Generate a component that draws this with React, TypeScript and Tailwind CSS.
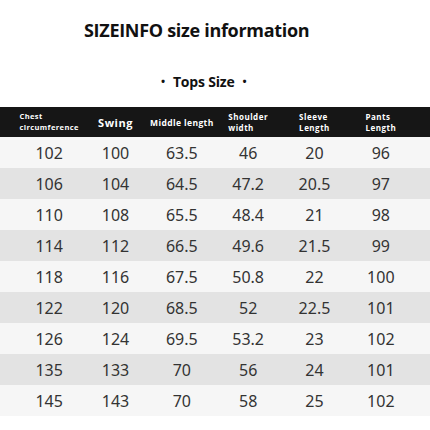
import * as React from "react";

const headers: { lines: string[]; size: string }[] = [
  { lines: ["Chest", "circumference"], size: "text-[7.5px] tracking-[0.4px]" },
  { lines: ["Swing"], size: "text-[11px] tracking-[0.5px]" },
  { lines: ["Middle length"], size: "text-[8.5px] tracking-[0.4px]" },
  { lines: ["Shoulder", "width"], size: "text-[8px] tracking-[0.5px]" },
  { lines: ["Sleeve", "Length"], size: "text-[8px] tracking-[0.5px]" },
  { lines: ["Pants", "Length"], size: "text-[8px] tracking-[0.5px]" },
];

const rows: string[][] = [
  ["102", "100", "63.5", "46", "20", "96"],
  ["106", "104", "64.5", "47.2", "20.5", "97"],
  ["110", "108", "65.5", "48.4", "21", "98"],
  ["114", "112", "66.5", "49.6", "21.5", "99"],
  ["118", "116", "67.5", "50.8", "22", "100"],
  ["122", "120", "68.5", "52", "22.5", "101"],
  ["126", "124", "69.5", "53.2", "23", "102"],
  ["135", "133", "70", "56", "24", "101"],
  ["145", "143", "70", "58", "25", "102"],
];

export default function App() {
  return (
    <div className="h-[430px] w-[430px] overflow-hidden bg-white font-['Open_Sans',sans-serif]">
      <div className="flex h-[60px] items-center pl-[84px]">
        <h1 className="text-[18px] font-bold tracking-[-0.3px] text-[#111]">SIZEINFO size information</h1>
      </div>
      <div className="flex h-[40px] items-center pl-[161px] pt-[2px]">
        <span className="flex items-center gap-[8px] text-[14px] font-bold tracking-[-0.2px] text-[#111]">
          <span className="text-[11px]">•</span>
          <span>Tops Size</span>
          <span className="text-[11px]">•</span>
        </span>
      </div>
      <div className="mt-[7px]">
        <div className="grid h-[30px] grid-cols-6 bg-[#161616] px-[16px] text-white">
          {headers.map((h, i) => (
            <div key={i} className="flex items-center justify-center">
              <div className={`${h.size} whitespace-nowrap text-left font-bold leading-[11px]`}>
                {h.lines.map((l) => (
                  <div key={l}>{l}</div>
                ))}
              </div>
            </div>
          ))}
        </div>
        {rows.map((r, ri) => (
          <div
            key={ri}
            className={`grid h-[31px] grid-cols-6 px-[16px] font-['Noto_Sans',sans-serif] text-[16px] text-[#333] ${ri % 2 === 0 ? "bg-[#f6f6f6]" : "bg-[#e3e3e3]"}`}
          >
            {r.map((v, ci) => (
              <div key={ci} className="flex items-center justify-center">
                {v}
              </div>
            ))}
          </div>
        ))}
      </div>
    </div>
  );
}
